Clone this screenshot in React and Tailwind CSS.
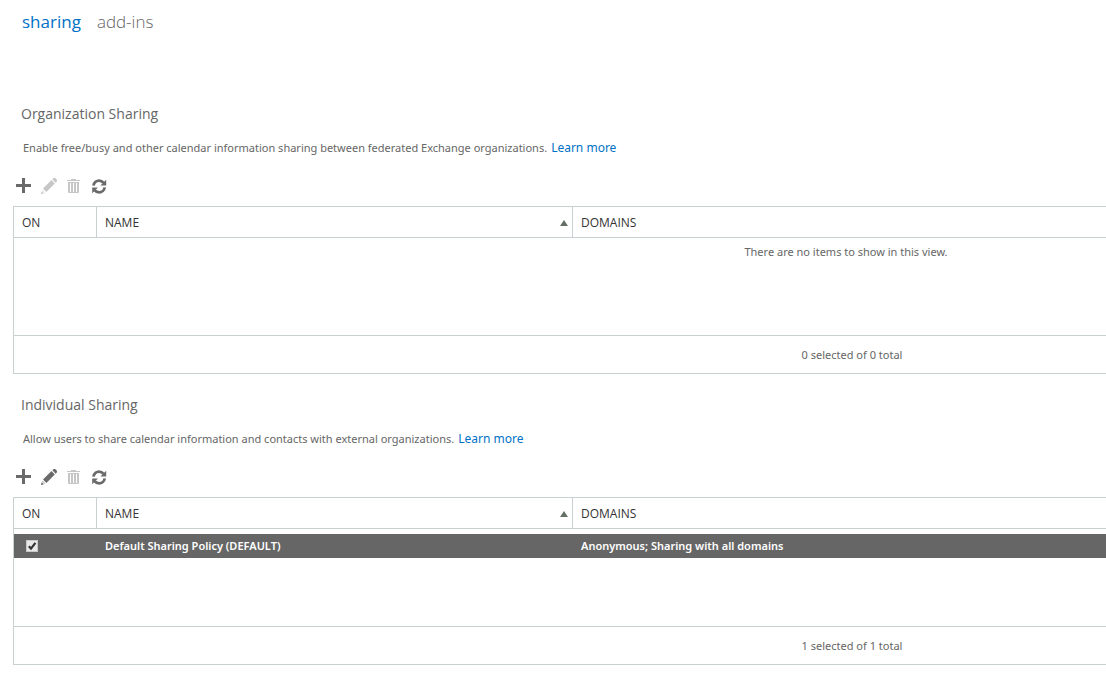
import { useState } from 'react';

const SECTIONS = [
  {
    id: 'organization',
    title: 'Organization Sharing',
    text: 'Enable free/busy and other calendar information sharing between federated Exchange organizations.',
    rows: [],
  },
  {
    id: 'individual',
    title: 'Individual Sharing',
    text: 'Allow users to share calendar information and contacts with external organizations.',
    rows: [{ name: 'Default Sharing Policy (DEFAULT)', domains: 'Anonymous; Sharing with all domains' }],
  },
];

function PlusIcon() {
  return (
    <svg width="16" height="16" viewBox="0 0 16 16" fill="currentColor" shapeRendering="crispEdges">
      <path d="M6 0h3v6h6v3H9v6H6V9H0V6h6z" />
    </svg>
  );
}

function PencilIcon() {
  return (
    <svg width="16" height="16" viewBox="0 0 16 16" fill="currentColor">
      <path d="M11.4 1.2 12 .6a2 2 0 0 1 2.8 0l.6.6a2 2 0 0 1 0 2.8l-.8.8z" />
      <path d="M10.5 2.1 13.8 5.5 5.4 13.9 2 10.6z" />
      <path d="M1.4 11.4 4.6 14.6 0 16z" opacity=".35" />
      <path d="M.6 13.6 2.6 15.4 0 16z" />
    </svg>
  );
}

function TrashIcon() {
  return (
    <svg width="16" height="16" viewBox="0 0 16 16" fill="currentColor">
      <path d="M5 1h5v1H5zM1 2h13v1H1z" />
      <path
        fillRule="evenodd"
        d="M2 4h11v10a1 1 0 0 1-1 1H3a1 1 0 0 1-1-1zM4 5v9h1V5zM7 5v9h1V5zM10 5v9h1V5z"
      />
    </svg>
  );
}

function RefreshIcon() {
  return (
    <svg width="16" height="16" viewBox="-1 -1 16 16" fill="none" stroke="currentColor" strokeWidth="2.8">
      <path d="M1.5 6.6C2 3.4 4.6 1.6 7 1.6c2 0 3.4.8 4.6 2.3" />
      <path d="M12.7 8.4c-.4 3-3 5-5.5 5-2 0-3.4-.8-4.6-2.3" />
      <path d="M14.2.8v5.6H8.4zM.2 14.2V8.6h5.7z" fill="currentColor" stroke="none" />
    </svg>
  );
}

function ToolButton({ label, disabled, children }) {
  return (
    <button
      type="button"
      aria-label={label}
      disabled={disabled}
      className="flex h-4 w-4 items-center justify-center text-[#6a6a6a] disabled:text-[#c6c6c6]"
    >
      {children}
    </button>
  );
}

function Toolbar({ canEdit }) {
  return (
    <div className="mt-5 flex gap-[9px] px-4">
      <ToolButton label="New"><PlusIcon /></ToolButton>
      <ToolButton label="Edit" disabled={!canEdit}><PencilIcon /></ToolButton>
      <ToolButton label="Delete" disabled><TrashIcon /></ToolButton>
      <ToolButton label="Refresh"><RefreshIcon /></ToolButton>
    </div>
  );
}

function RowCheck({ label }) {
  const [on, setOn] = useState(true);
  return (
    <span className="relative ml-1 block h-3 w-3">
      <input
        type="checkbox"
        aria-label={label}
        checked={on}
        onChange={(e) => setOn(e.target.checked)}
        className="block h-3 w-3 appearance-none border border-[#c8c8c8] bg-[#e9e9e9]"
      />
      {on && (
        <svg className="pointer-events-none absolute inset-0" width="12" height="12" viewBox="0 0 12 12" fill="none">
          <path d="M2.8 6.2 5 8.6 9.4 2.8" stroke="#333333" strokeWidth="2.2" />
        </svg>
      )}
    </span>
  );
}

// The list is wider than a small window, the overflow is clipped on the right.
function PolicyGrid({ title, rows }) {
  const th = 'h-[31px] border-b border-[#c8d0d2] px-2 pt-0.5 text-left text-[12px] font-normal';
  return (
    <div className="ml-[13px] mt-3 min-w-[1678px] border border-[#c8d0d2] font-['Noto_Sans',sans-serif] text-[11px]">
      <div className="min-h-[128px]">
        <table aria-label={title} className="w-full table-fixed border-separate border-spacing-0">
          <thead className="font-['Open_Sans',sans-serif] text-[#333333]">
            <tr>
              <th className={`${th} w-[83px] border-r`}>ON</th>
              <th className={`${th} w-[476px] border-r`} aria-sort="ascending">
                <span className="flex items-center justify-between">
                  NAME
                  <svg className="-mr-1" width="8" height="6" viewBox="0 0 8 6" fill="#666f66">
                    <path d="M4 0 8 6H0z" />
                  </svg>
                </span>
              </th>
              <th className={th}>DOMAINS</th>
            </tr>
          </thead>
          <tbody>
            <tr aria-hidden="true"><td colSpan={3} className="h-[5px]" /></tr>
            {rows.length === 0 && (
              <tr>
                <td colSpan={3} className="pr-3 text-center leading-[18px]">There are no items to show in this view.</td>
              </tr>
            )}
            {rows.map((row) => (
              <tr key={row.name} className="bg-[#666666] font-semibold text-white">
                <td className="h-6 px-2"><RowCheck label={row.name} /></td>
                <td className="h-6 px-2">{row.name}</td>
                <td className="h-6 px-2">{row.domains}</td>
              </tr>
            ))}
          </tbody>
        </table>
      </div>
      <p className="border-t border-[#c8d0d2] text-center leading-[37px]">
        {rows.length} selected of {rows.length} total
      </p>
    </div>
  );
}

function Section({ id, title, text, rows }) {
  return (
    <section className="mb-[19px]">
      <h2 className="px-[21px] text-[14px] leading-6">{title}</h2>
      <p className="mt-3 flex items-baseline gap-1 px-[23px] font-['Noto_Sans',sans-serif] text-[11px] leading-5">
        {text}
        <a href={`#${id}`} className="text-[12px] leading-4 text-[#0072c6]">Learn more</a>
      </p>
      <Toolbar canEdit={rows.length > 0} />
      <PolicyGrid title={title} rows={rows} />
    </section>
  );
}

export default function App() {
  return (
    <main className="overflow-hidden bg-white font-['Open_Sans','Noto_Sans',sans-serif] text-[#666666]">
      <nav className="mb-[68px] flex gap-4 px-[22px] pt-[10px] text-[17px] leading-6">
        <a href="#sharing" aria-current="page" className="text-[#0072c6]">sharing</a>
        <a href="#add-ins" className="font-light">add-ins</a>
      </nav>
      {SECTIONS.map((section) => (
        <Section key={section.id} {...section} />
      ))}
    </main>
  );
}
